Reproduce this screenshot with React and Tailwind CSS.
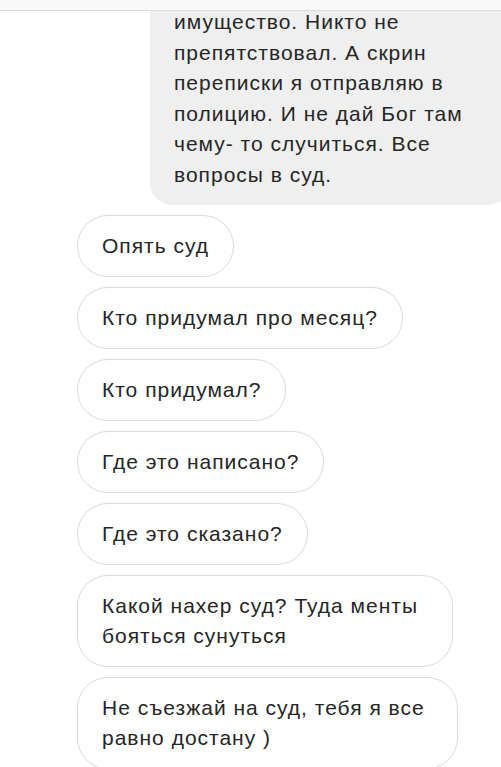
export default function App() {
  const pills = [
    { t: "Опять суд", w: "" },
    { t: "Кто придумал про месяц?", w: "" },
    { t: "Кто придумал?", w: "" },
    { t: "Где это написано?", w: "" },
    { t: "Где это сказано?", w: "" },
    { t: "Какой нахер суд? Туда менты бояться сунуться", w: "w-[376px]" },
    { t: "Не съезжай на суд, тебя я все равно достану )", w: "w-[381px]" },
  ];
  return (
    <div
      className="w-[501px] h-[767px] overflow-hidden bg-white text-[#262626]"
      style={{ fontFamily: '"Liberation Sans", Arial, sans-serif' }}
    >
      <div className="relative z-10 h-[11px] bg-[#f9f9f9] border-b border-[#dcdcdc]" />
      <div className="-mt-[20px] ml-[150px] w-[360px] rounded-[22px] bg-[#efefef] pl-[24px] pr-[30px] pt-[16px] pb-[15px] text-[21px] leading-[30.5px] tracking-[1px]">
        имущество. Никто не препятствовал. А скрин переписки я отправляю в полицию. И не дай Бог там чему- то случиться. Все вопросы в суд.
      </div>
      <div className="mt-[10px] pl-[77px] flex flex-col items-start gap-[10px]">
        {pills.map((p) => (
          <div
            key={p.t}
            className={`max-w-[382px] rounded-[31px] border border-[#dbdbdb] px-[24px] py-[15px] text-[21px] leading-[30px] tracking-[1px] ${p.w}`}
          >
            {p.t}
          </div>
        ))}
      </div>
    </div>
  );
}
